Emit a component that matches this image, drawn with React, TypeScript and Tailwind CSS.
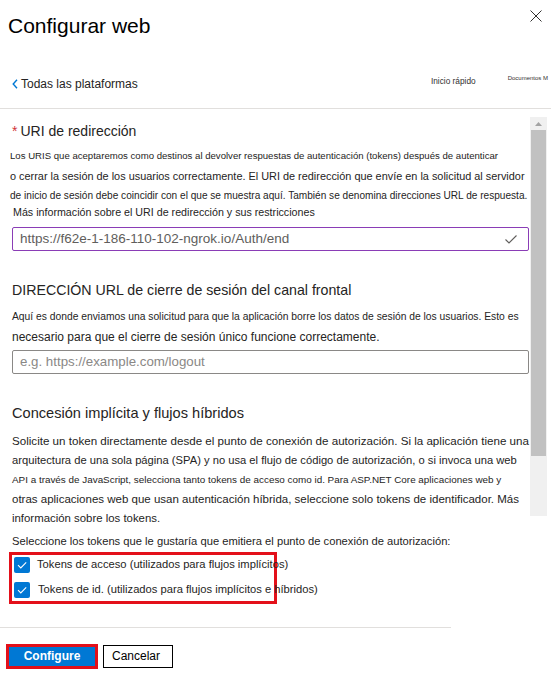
import React from 'react';

// Panel "Configurar web" (portal de registro de aplicaciones)

function CheckBox() {
  return (
    <svg width="16" height="16" viewBox="0 0 16 16" className="shrink-0">
      <rect x="0" y="0" width="16" height="16" rx="2" fill="#0078d4" />
      <path d="M4 8.2 L6.8 11 L12.2 5.4" fill="none" stroke="#ffffff" strokeWidth="1.1" />
    </svg>
  );
}

// cada línea lleva su propio tamaño, como en la captura original
const lineasUri = [
  { t: 'Los URIS que aceptaremos como destinos al devolver respuestas de autenticación (tokens) después de autenticar', c: 'text-[9.6px]' },
  { t: 'o cerrar la sesión de los usuarios correctamente. El URI de redirección que envíe en la solicitud al servidor', c: 'text-[10.9px]' },
  { t: 'de inicio de sesión debe coincidir con el que se muestra aquí. También se denomina direcciones URL de respuesta.', c: 'text-[10.1px]' },
];

const lineasLogout = [
  { t: 'Aquí es donde enviamos una solicitud para que la aplicación borre los datos de sesión de los usuarios. Esto es', c: 'text-[10.3px]' },
  { t: 'necesario para que el cierre de sesión único funcione correctamente.', c: 'text-[12px]' },
];

const lineasImplicita = [
  { t: 'Solicite un token directamente desde el punto de conexión de autorización. Si la aplicación tiene una', c: 'text-[11.6px]' },
  { t: 'arquitectura de una sola página (SPA) y no usa el flujo de código de autorización, o si invoca una web', c: 'text-[11.2px]' },
  { t: 'API a través de JavaScript, selecciona tanto tokens de acceso como id. Para ASP.NET Core aplicaciones web y', c: 'text-[9.9px]' },
  { t: 'otras aplicaciones web que usan autenticación híbrida, seleccione solo tokens de identificador. Más', c: 'text-[11.5px]' },
  { t: 'información sobre los tokens.', c: 'text-[11.4px]' },
];

function App() {
  return (
    <div className="w-[551px] h-[685px] overflow-hidden bg-white text-[#252423] font-['Liberation_Sans',Arial,sans-serif]">
      {/* cabecera */}
      <header className="flex items-start justify-between h-[62px] pl-[8px] pr-[9px] pt-[12px]">
        <h1 className="text-[21px] leading-[28px] text-black">Configurar web</h1>
        <svg width="12" height="12" viewBox="0 0 12 12" className="mt-[-2px]">
          <path d="M0.5 0.5 L11.5 11.5 M11.5 0.5 L0.5 11.5" stroke="#323130" strokeWidth="1" />
        </svg>
      </header>

      <nav className="flex items-start h-[47px] border-b border-[#e1dfdd] pl-[12px] pr-[3px]">
        <div className="flex items-center gap-[3px] mt-[14px] leading-[16px]">
          <svg width="6" height="10" viewBox="0 0 6 10">
            <path d="M5 0.8 L1.2 5 L5 9.2" fill="none" stroke="#0078d4" strokeWidth="1.4" />
          </svg>
          <span className="text-[12px]">Todas las plataformas</span>
        </div>
        <div className="flex-1" />
        <span className="mt-[12px] text-[8.3px] leading-[14px] text-[#323130]">Inicio rápido</span>
        <span className="ml-[32px] mt-[12px] text-[6px] leading-[8px] text-[#323130]">Documentos M</span>
      </nav>

      {/* zona con desplazamiento */}
      <div className="flex items-start pt-[8px]">
        <div className="flex-1 min-w-0 pl-[10px] pr-[1px]">
          <h2 className="mt-[4px] ml-[2px] text-[14px] leading-[20px]">
            <span className="text-[#d13438] mr-[3px]">*</span>URI de redirección
          </h2>
          <div className="mt-[5px] leading-[20px] whitespace-nowrap">
            {lineasUri.map(l => (
              <div key={l.t} className={l.c}>{l.t}</div>
            ))}
          </div>
          <p className="ml-[3px] text-[10.7px] leading-[13px]">
            Más información sobre el URI de redirección y sus restricciones
          </p>
          <div className="mt-[8px] ml-[2px] h-[24px] flex items-center justify-between border border-[#8a3db6] rounded-[2px] pl-[7px] pr-[11px]">
            <span className="text-[13.5px] text-[#605e5c]">https://f62e-1-186-110-102-ngrok.io/Auth/end</span>
            <svg width="12" height="9" viewBox="0 0 12 9">
              <path d="M0.5 4.5 L4 8 L11.5 0.5" fill="none" stroke="#605e5c" strokeWidth="1.1" />
            </svg>
          </div>

          <h2 className="mt-[28px] ml-[2px] text-[14.2px] leading-[22px]">
            DIRECCIÓN URL de cierre de sesión del canal frontal
          </h2>
          <div className="mt-[6px] ml-[2px] leading-[20px] whitespace-nowrap">
            {lineasLogout.map(l => (
              <div key={l.t} className={l.c}>{l.t}</div>
            ))}
          </div>
          <div className="mt-[3px] ml-[2px] h-[24px] flex items-center border border-[#8a8886] rounded-[2px] pl-[7px]">
            <span className="text-[13.3px] text-[#8a8886]">e.g. https://example.com/logout</span>
          </div>

          <h2 className="mt-[28px] ml-[2px] text-[14.6px] leading-[22px]">
            Concesión implícita y flujos híbridos
          </h2>
          <div className="mt-[7px] ml-[2px] leading-[19.5px] whitespace-nowrap">
            {lineasImplicita.map(l => (
              <div key={l.t} className={l.c}>{l.t}</div>
            ))}
          </div>
        </div>

        {/* barra de desplazamiento */}
        <div className="w-[17px] h-[399px] mr-[4px] flex flex-col bg-[#f0f0f0] shrink-0">
          <div className="h-[13px] flex items-center justify-center">
            <svg width="7" height="4" viewBox="0 0 7 4">
              <path d="M0 4 L3.5 0 L7 4 Z" fill="#a3a3a3" />
            </svg>
          </div>
          <div className="h-[326px] mx-[1px] bg-[#c1c1c1]" />
        </div>
      </div>

      <div className="pl-[12px]">
        <p className="mt-[3px] text-[11.2px] leading-[18px]">
          Seleccione los tokens que le gustaría que emitiera el punto de conexión de autorización:
        </p>
        <div className="mt-[2px] ml-[-3px] w-[268px] border-[3px] border-[#e3101a] pl-[2px] pb-[1px] flex flex-col gap-[5px]">
          <label className="flex items-center gap-[7px] h-[20px] text-[11.2px] whitespace-nowrap">
            <CheckBox />
            Tokens de acceso (utilizados para flujos implícitos)
          </label>
          <label className="flex items-center gap-[8px] h-[20px] text-[11.2px] whitespace-nowrap">
            <CheckBox />
            Tokens de id. (utilizados para flujos implícitos e híbridos)
          </label>
        </div>
      </div>

      <div className="mt-[23px] w-[451px] border-t border-[#e1dfdd]" />

      <div className="flex items-center gap-[5px] pl-[6px] mt-[16px]">
        <button className="w-[92px] h-[25px] border-[3px] border-[#e3101a] bg-[#0078d4] text-white text-[12px] font-bold">
          Configure
        </button>
        <button className="w-[70px] h-[23px] border border-black bg-white text-[12px] text-black pr-[4px]">
          Cancelar
        </button>
      </div>
    </div>
  );
}

export default App;
